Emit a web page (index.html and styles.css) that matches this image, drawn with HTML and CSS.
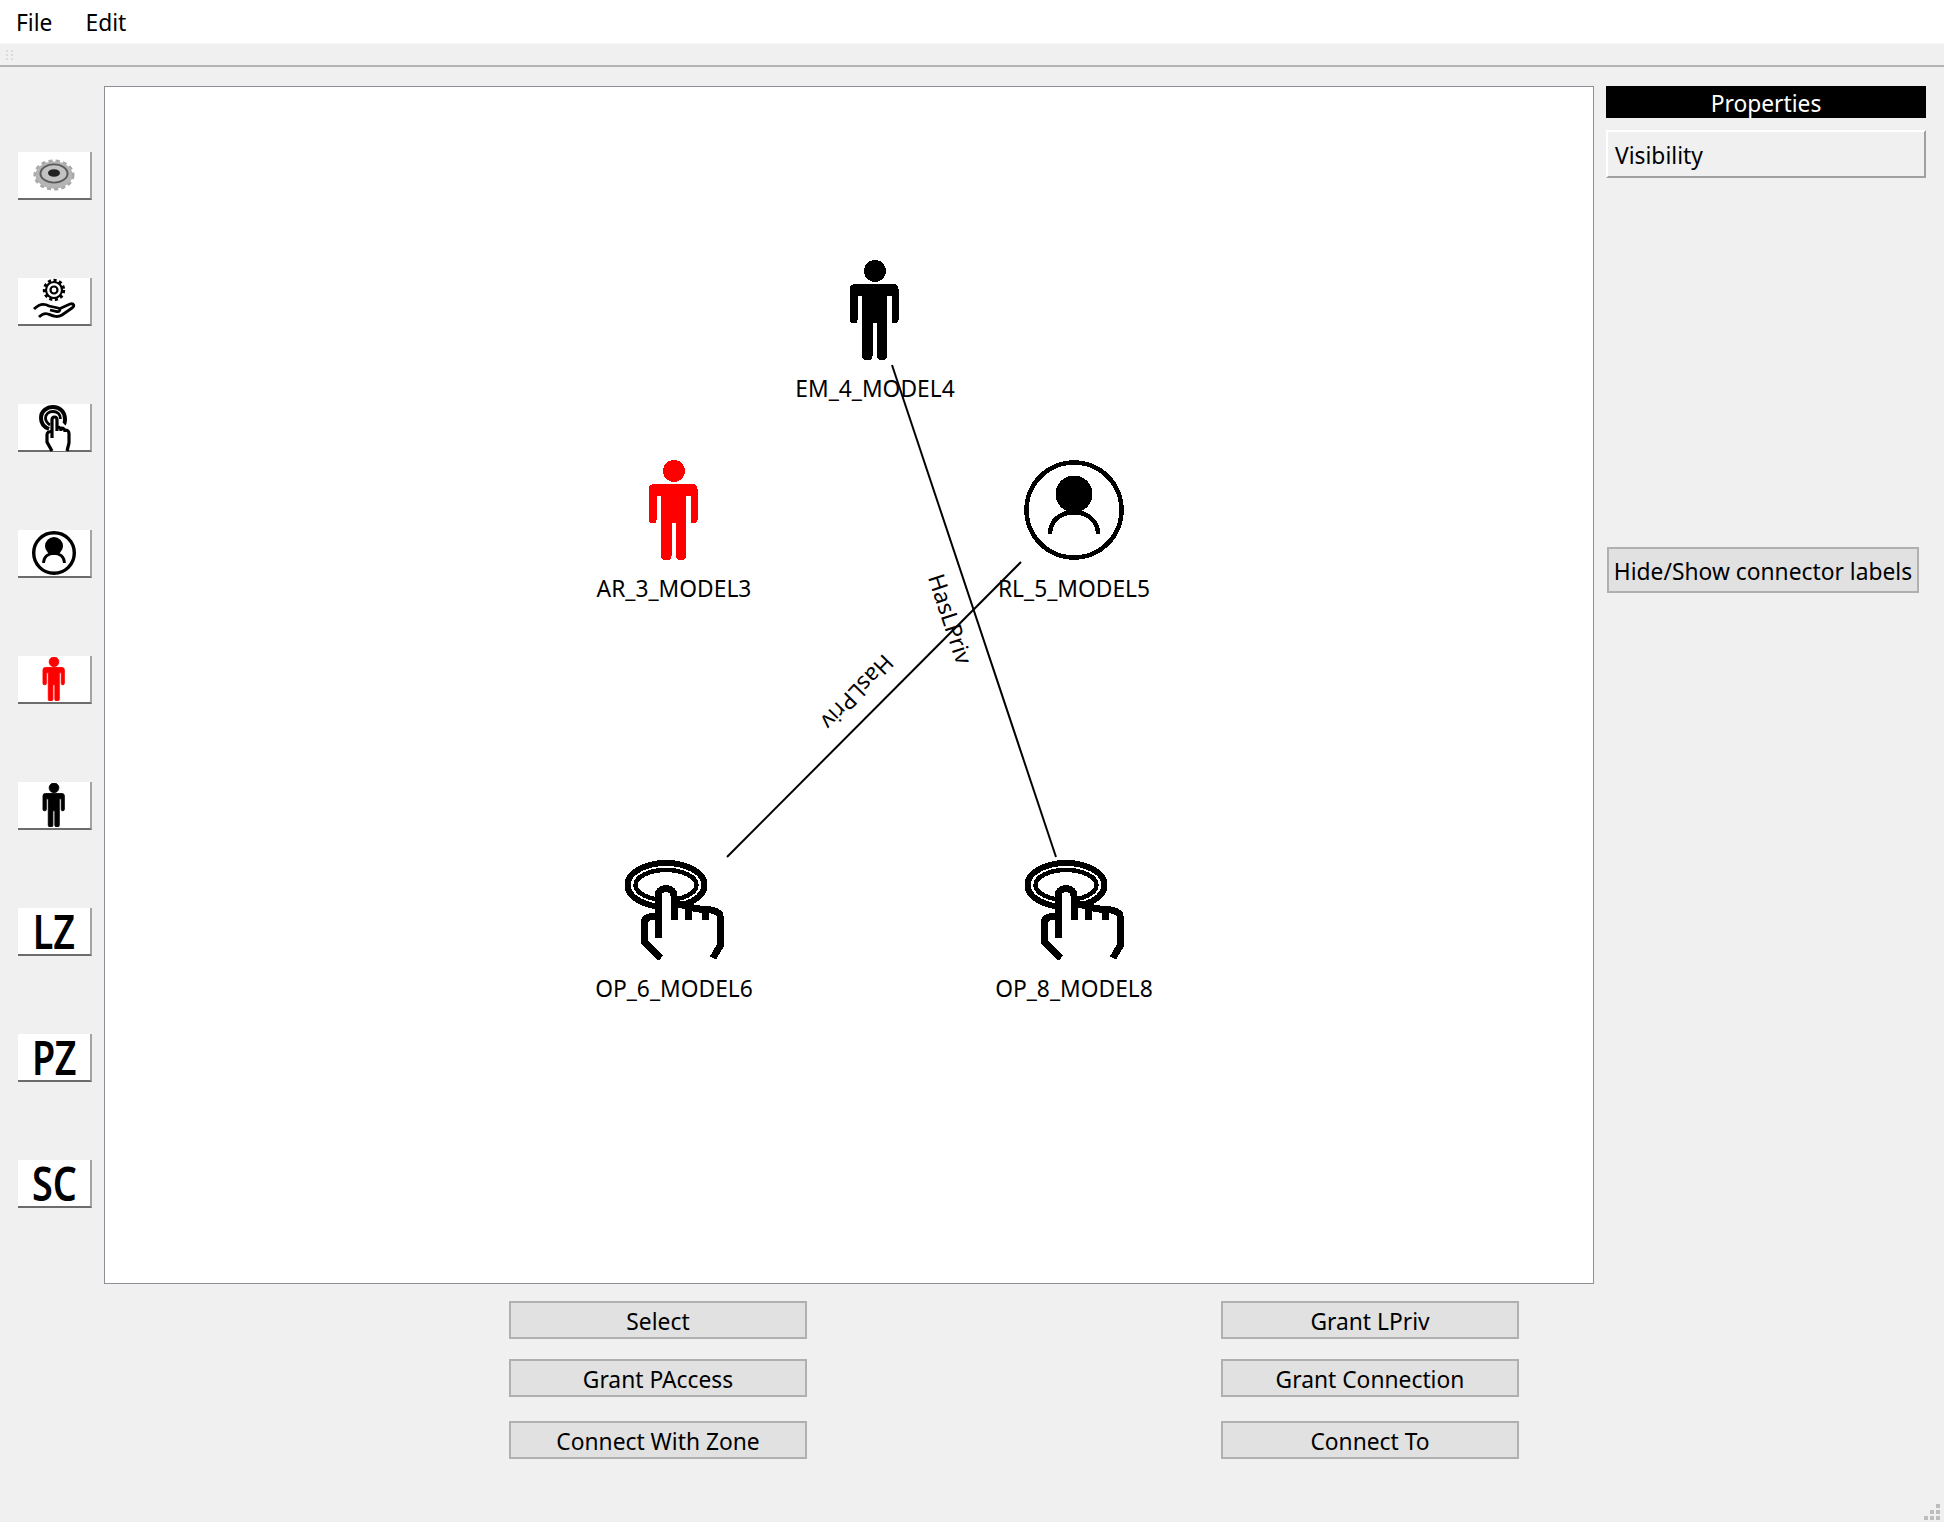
FILE: index.html
```html
<!DOCTYPE html>
<html lang="en">
<head>
    <meta charset="UTF-8">
    <title>Model Editor</title>
    <link rel="stylesheet" href="styles.css">
</head>
<body>

    <!-- Shared icons -->
    <svg class="icon-defs" width="0" height="0">
        <symbol id="person" viewBox="0 0 100 100">
            <circle cx="50" cy="11" r="11"/>
            <path d="M30 24H68.500Q73.500 24 73.500 29V60Q73.500 63 70.500 63H69Q66.500 63 66.500 60V36H62V96Q62 100 58 100H56Q52 100 52 96V63H47.500V96Q47.500 100 43.500 100H41Q37 100 37 96V36H32.500V60Q32.500 63 30 63H28Q25 63 25 60V29Q25 24 30 24Z"/>
        </symbol>
        <symbol id="touch" viewBox="0 0 100 100">
            <ellipse cx="42" cy="25" rx="38.500" ry="22" fill="none" stroke="#000" stroke-width="6"/>
            <ellipse cx="42" cy="25" rx="30.500" ry="15" fill="none" stroke="#000" stroke-width="4.500"/>
            <path fill="#fff" d="M19 62Q21 56 33 56V36C33 26 50 26 50 36V44L90 52Q97 53 97 60V87L89 98H36L19 83Z"/>
            <path fill="none" stroke="#000" stroke-width="7" d="M34 78V36C34 26 50 26 50 36V60M50 43C58 45 64 46 64 48V60M64 47L81 50V60M81 49C90 50 96 52 96 56V86L89 98M33 56C24 56 20 59 20 64V82L37 98"/>
        </symbol>
        <symbol id="role" viewBox="0 0 100 100">
            <circle cx="50" cy="50" r="47.500" fill="none" stroke="#000" stroke-width="4.500"/>
            <circle cx="50" cy="34" r="18.500"/>
            <path d="M26 74C26 45 74 45 74 74" fill="none" stroke="#000" stroke-width="4.500"/>
        </symbol>
    </svg>

    <!-- Menu -->
    <div class="menubar">
        <span class="menu-item">File</span>
        <span class="menu-item">Edit</span>
    </div>
    <div class="toolbar">
        <svg class="grip" width="8" height="10" viewBox="0 0 8 10">
            <path d="M0 0h2v2H0zM5 0h2v2H5zM0 4h2v2H0zM5 4h2v2H5zM0 8h2v2H0zM5 8h2v2H5z"/>
        </svg>
    </div>

    <div class="workspace">
        <!-- Palette -->
        <div class="palette">
            <button class="tool">
                <svg class="tool-icon" viewBox="0 0 44 44">
                    <ellipse cx="22" cy="22" rx="18.500" ry="13.500" fill="#a9a9a9" stroke="#a9a9a9" stroke-width="4" stroke-dasharray="4 3"/>
                    <ellipse cx="22" cy="22" rx="18" ry="13" fill="#b5b5b5"/>
                    <ellipse cx="22" cy="20.500" rx="14.500" ry="10" fill="#5a5a5a"/>
                    <ellipse cx="22" cy="20.500" rx="12.500" ry="8.300" fill="#c2c2c2"/>
                    <ellipse cx="22" cy="20" rx="6" ry="3.800" fill="#222"/>
                </svg>
            </button>
            <button class="tool">
                <svg class="tool-icon" viewBox="0 0 44 44" fill="none" stroke="#000">
                    <circle cx="22" cy="11" r="9.500" stroke-width="3.400" stroke-dasharray="3 2.500"/>
                    <circle cx="22" cy="11" r="8" stroke-width="2.200"/>
                    <circle cx="22" cy="11" r="3.500" stroke-width="2.200"/>
                    <path stroke-width="2.800" d="M2 30C7 25 12 24 17 27L26 29C29 30 28 33 25 32.500L18 31"/>
                    <path stroke-width="2.800" d="M27 30L38 25C42 24 43 27 40 29L30 36C25 39 21 37 16 35C13 34 10 35 7 38"/>
                </svg>
            </button>
            <button class="tool">
                <svg class="tool-icon" viewBox="0 0 44 44" fill="none" stroke="#000">
                    <path stroke-width="4" d="M17 24C12 22 9 18 9 13C9 6 15 2 21 2C28 2 33 7 33 14C33 16 33 18 32 19"/>
                    <path stroke-width="2.800" d="M18 20C15 18 13.500 16 13.500 13C13.500 9 17 6.500 21 6.500C25 6.500 28.500 9 28.500 14"/>
                    <path fill="#fff" stroke="none" d="M20 15C20 11 25 11 25 15V22L37 26V38L35 46H20L15 37V30L20 27Z"/>
                    <path stroke-width="3.200" d="M20 33V15C20 11 25 11 25 15V26M25 22C28 22 29 23 29 26M29 23C32 23 33 24 33 27M33 25C36 25 37 26 37 29V38L35 46M20 27C16 26 15 28 15 30V37L20 46"/>
                </svg>
            </button>
            <button class="tool">
                <svg class="tool-icon" viewBox="0 0 44 44" fill="none" stroke="#000">
                    <circle cx="22" cy="22" r="20.300" stroke-width="3.400"/>
                    <circle cx="22" cy="15" r="9" fill="#000" stroke="none"/>
                    <path stroke-width="2.800" d="M11.500 32C11.500 19 32.500 19 32.500 32"/>
                </svg>
            </button>
            <button class="tool person-red"><svg class="tool-icon"><use href="#person"/></svg></button>
            <button class="tool person-black"><svg class="tool-icon"><use href="#person"/></svg></button>
            <button class="tool tool-text"><span>LZ</span></button>
            <button class="tool tool-text"><span>PZ</span></button>
            <button class="tool tool-text"><span>SC</span></button>
        </div>

        <div class="center">
            <!-- Diagram -->
            <div class="canvas">
                <div class="node node-em">
                    <svg class="node-icon"><use href="#person"/></svg>
                    <span class="node-label">EM_4_MODEL4</span>
                </div>
                <div class="node node-ar person-red">
                    <svg class="node-icon"><use href="#person"/></svg>
                    <span class="node-label">AR_3_MODEL3</span>
                </div>
                <div class="node node-rl">
                    <svg class="node-icon"><use href="#role"/></svg>
                    <span class="node-label">RL_5_MODEL5</span>
                </div>
                <div class="node node-op6">
                    <svg class="node-icon"><use href="#touch"/></svg>
                    <span class="node-label">OP_6_MODEL6</span>
                </div>
                <div class="node node-op8">
                    <svg class="node-icon"><use href="#touch"/></svg>
                    <span class="node-label">OP_8_MODEL8</span>
                </div>
                <svg class="connectors" width="1488" height="1196">
                    <line x1="787" y1="278" x2="951" y2="770"/>
                    <line x1="916" y1="475" x2="622" y2="770"/>
                </svg>
                <span class="edge-label edge-em">HasLPriv</span>
                <span class="edge-label edge-rl">HasLPriv</span>
            </div>

            <!-- Actions -->
            <div class="actions">
                <button class="action-btn">Select</button>
                <button class="action-btn">Grant LPriv</button>
                <button class="action-btn">Grant PAccess</button>
                <button class="action-btn">Grant Connection</button>
                <button class="action-btn action-last">Connect With Zone</button>
                <button class="action-btn action-last">Connect To</button>
            </div>
        </div>

        <!-- Properties -->
        <div class="properties">
            <div class="properties-title">Properties</div>
            <div class="visibility">Visibility</div>
            <button class="labels-btn">Hide/Show connector labels</button>
        </div>
    </div>

    <svg class="size-grip" width="16" height="16" viewBox="0 0 16 16">
        <path d="M12 0h4v4h-4zM6 6h4v4H6zM12 6h4v4h-4zM0 12h4v4H0zM6 12h4v4H6zM12 12h4v4h-4z"/>
    </svg>

</body>
</html>
```

FILE: styles.css
```css
html, body {
    margin: 0;
    height: 100%;
}
body {
    font-family: "Noto Sans", sans-serif;
    font-size: 22.800px;
    background-color: #f0f0f0;
    color: #000;
    overflow: hidden;
}
button {
    font: inherit;
    color: inherit;
    padding: 0;
    cursor: pointer;
}
.icon-defs {
    position: absolute;
}

/* Menu */
.menubar {
    height: 44px;
    background-color: #fff;
    border-bottom: 1px solid #f8f8f8;
    display: flex;
    align-items: center;
    box-sizing: border-box;
    padding: 1px 0 0 16px;
    gap: 33px;
}
.toolbar {
    height: 23px;
    box-sizing: border-box;
    border-bottom: 2px solid #b4b4b4;
    padding: 6px 0 0 6px;
}
.grip {
    display: block;
    fill: #dcdcdc;
}

/* Main layout */
.workspace {
    display: flex;
    padding-top: 19px;
}
.palette {
    width: 86px;
    margin-left: 18px;
    padding-top: 66px;
    display: flex;
    flex-direction: column;
    gap: 78px;
}
.tool {
    width: 74px;
    height: 48px;
    box-sizing: border-box;
    background-color: #fff;
    border: none;
    border-right: 2px solid #a4a4a4;
    border-bottom: 2px solid #6c6c6c;
    display: block;
    position: relative;
}
.tool-icon {
    position: absolute;
    left: 14px;
    top: 1px;
    width: 44px;
    height: 44px;
    overflow: visible;
}
.person-black .tool-icon {
    stroke: #000;
    stroke-width: 2;
}
.person-red .tool-icon {
    stroke: #f00;
    stroke-width: 2;
}
.tool-text {
    font-size: 46px;
    font-weight: 600;
    line-height: 42px;
}
.tool-text span {
    display: inline-block;
    transform: scaleX(0.82);
}
.person-red svg {
    fill: #f00;
}

/* Diagram */
.canvas {
    position: relative;
    width: 1488px;
    height: 1196px;
    background-color: #fff;
    border: 1px solid #8b9097;
    margin-right: 12px;
}
.node {
    position: absolute;
    width: 100px;
    height: 144px;
}
.node-icon {
    display: block;
    width: 100px;
    height: 100px;
    shape-rendering: crispEdges;
}
.node-label {
    position: absolute;
    left: -50px;
    top: 113px;
    width: 200px;
    line-height: 32px;
    text-align: center;
}
.node-em { left: 720px; top: 173px; }
.node-ar { left: 519px; top: 373px; }
.node-rl { left: 919px; top: 373px; }
.node-op6 { left: 519px; top: 773px; }
.node-op8 { left: 919px; top: 773px; }
.connectors {
    position: absolute;
    left: 0;
    top: 0;
    stroke: #000;
    stroke-width: 2;
}
.edge-label {
    position: absolute;
    line-height: 30px;
    white-space: nowrap;
}
.edge-em {
    left: 845px;
    top: 532px;
    transform: translate(-50%, -50%) rotate(71.600deg);
}
.edge-rl {
    left: 752px;
    top: 605px;
    transform: translate(-50%, -50%) rotate(134deg);
}

/* Action buttons */
.actions {
    margin: 17px 0 0 405px;
    display: grid;
    grid-template-columns: 298px 298px;
    column-gap: 414px;
    row-gap: 20px;
}
.action-btn, .labels-btn {
    height: 38px;
    box-sizing: border-box;
    background-color: #e1e1e1;
    border: 2px solid #b0b0b0;
    padding-top: 3px;
    line-height: 32px;
}
.action-last {
    margin-top: 4px;
}

/* Properties */
.properties {
    width: 320px;
}
.properties-title {
    height: 32px;
    background-color: #000;
    color: #fff;
    line-height: 35px;
    text-align: center;
}
.visibility {
    height: 48px;
    margin-top: 12px;
    box-sizing: border-box;
    padding-left: 7px;
    line-height: 47px;
    border: 2px solid #fff;
    border-right-color: #a0a0a0;
    border-bottom-color: #a0a0a0;
}
.labels-btn {
    display: block;
    width: 312px;
    height: 46px;
    margin: 369px 0 0 1px;
}
.size-grip {
    position: absolute;
    right: 4px;
    bottom: 2px;
    fill: #bdbdbd;
}
```
